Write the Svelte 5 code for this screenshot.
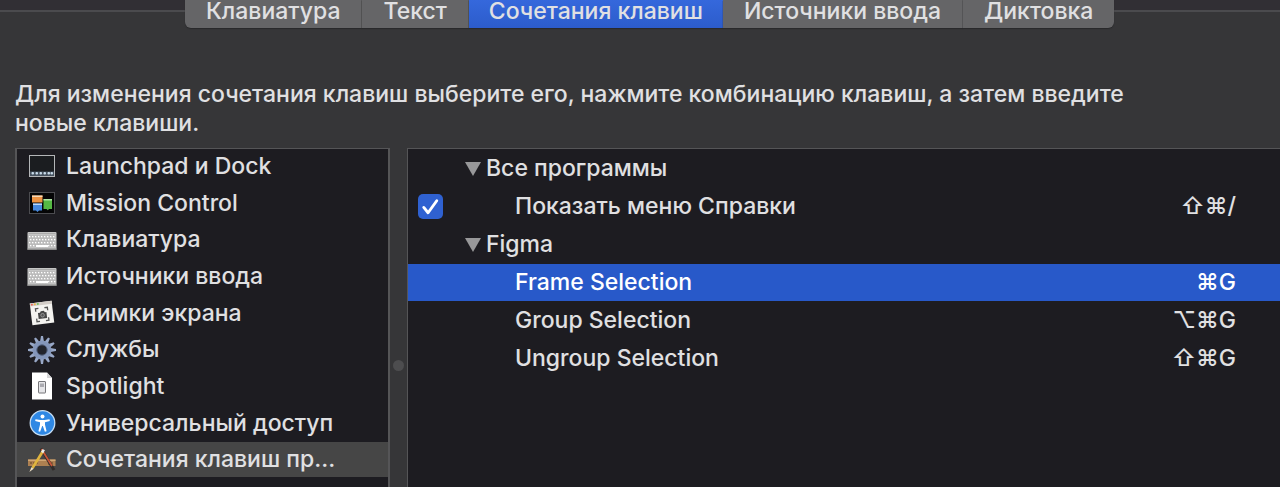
<script>
    let tabs = ['Клавиатура', 'Текст', 'Сочетания клавиш', 'Источники ввода', 'Диктовка'];
    let activeTab = $state('Сочетания клавиш');

    let categories = [
        { icon: 'launchpad', name: 'Launchpad и Dock' },
        { icon: 'mission', name: 'Mission Control' },
        { icon: 'keyboard', name: 'Клавиатура' },
        { icon: 'keyboard', name: 'Источники ввода' },
        { icon: 'screenshot', name: 'Снимки экрана' },
        { icon: 'gear', name: 'Службы' },
        { icon: 'spotlight', name: 'Spotlight' },
        { icon: 'access', name: 'Универсальный доступ' },
        { icon: 'apps', name: 'Сочетания клавиш пр...' }
    ];
    let activeCategory = $state('Сочетания клавиш пр...');

    let groups = $state([
        {
            name: 'Все программы',
            open: true,
            items: [{ name: 'Показать меню Справки', keys: '⇧⌘/', checkable: true, checked: true }]
        },
        {
            name: 'Figma',
            open: true,
            items: [
                { name: 'Frame Selection', keys: '⌘G' },
                { name: 'Group Selection', keys: '⌥⌘G' },
                { name: 'Ungroup Selection', keys: '⇧⌘G' }
            ]
        }
    ]);
    let selected = $state('Frame Selection');

    const keyRows = [12, 15, 18, 21];
    const keyCols = [3, 6, 9, 12, 15, 18, 21, 24, 27];
    const teeth = [0, 30, 60, 90, 120, 150, 180, 210, 240, 270, 300, 330];
</script>

{#snippet icon(name)}
    <svg class="icon" viewBox="0 0 30 30" aria-hidden="true">
        {#if name === 'launchpad'}
            <rect x="2.5" y="4.5" width="25" height="21" fill="#1b1d20" stroke="#b4b6b8" />
            <path d="M3 20.500h24v4.500H3z" fill="#47525f" />
            {#each [4.5, 8.5, 12.5, 16.5, 20.5, 23.5] as x}
                <rect {x} y="21" width="2.500" height="2.600" rx="1" fill="#c8dbea" />
            {/each}
        {:else if name === 'mission'}
            <rect x="2.5" y="4.5" width="25" height="21" fill="#050506" stroke="#4c4c50" />
            <path d="M5 7.500h10.500v7H5z" fill="#ef9443" />
            <path d="M5 7.500h10.500V9H5z" fill="#f6d9b8" />
            <path d="M6 15.500h9v7h-3l-1.500 1.500L9 22.500H6z" fill="#4789df" />
            <path d="M6 15.500h9V17H6z" fill="#bcd9fa" />
            <path d="M16.500 11H25v10h-3l-1.200 1.200L19.500 21h-3z" fill="#55b944" />
            <path d="M16.500 11H25v1.500h-8.500z" fill="#b3e6a7" />
        {:else if name === 'keyboard'}
            <rect x="0.5" y="7" width="29" height="18" rx="1" fill="#c5c5c5" />
            <path d="M0.500 23.500h29V25h-29z" fill="#8c8c8c" />
            <path d="M1.500 8.500h27" stroke="#aaa" />
            {#each keyRows as y, i}
                {#each keyCols as x}
                    <rect x={x + (i % 2) - 1.5} y={y - 1.5} width="2.300" height="2.200" rx="0.4" fill="#fff" stroke="#8b8b8b" stroke-width="0.4" />
                {/each}
            {/each}
            <path d="M9 20h12v2H9z" fill="#fff" />
        {:else if name === 'screenshot'}
            <g transform="rotate(-7 15 15)">
                <rect x="4" y="4" width="22" height="22" fill="#f4f3f0" />
                <path d="M4 4h22v3H4z" fill="#d3cdc8" />
                <circle cx="6" cy="5.500" r="1" fill="#eb6656" />
                <circle cx="9" cy="5.500" r="1" fill="#eab84b" />
                <circle cx="12" cy="5.500" r="1" fill="#6fc25c" />
                <path d="M9 13v-3h3M18 10h3v3M21 20v3h-3M12 23H9v-3" fill="none" stroke="#555" stroke-width="1.300" />
                <path d="M11 14.500h2l1-1.500h3l1 1.500h1.500v6H11z" fill="#464646" />
                <circle cx="15.300" cy="17.300" r="1.800" fill="#555" stroke="#aaa" stroke-width="0.7" />
            </g>
        {:else if name === 'gear'}
            {#each teeth as angle}
                <path d="M14 1h2l.9 5.500h-3.800z" fill="#98a8c7" transform="rotate({angle} 15 15)" />
            {/each}
            <circle cx="15" cy="15" r="7.300" fill="none" stroke="#8496ba" stroke-width="4.400" />
            <circle cx="15" cy="15" r="5.200" fill="#22242c" stroke="#566584" stroke-width="1" />
        {:else if name === 'spotlight'}
            <path d="M5 1.500h15l5 5.500v21.500H5z" fill="#fff" />
            <path d="M20 1.500V7h5z" fill="#d5d5d7" />
            <rect x="11.500" y="10.500" width="7" height="11.500" rx="0.5" fill="#e5e5e8" stroke="#77777b" />
            <path d="M13 12.500h4v3.500h-4z" fill="#aaaab0" />
        {:else if name === 'access'}
            <circle cx="15.500" cy="15" r="12.300" fill="#2f88e4" stroke="#c5ddf3" stroke-width="1.300" />
            <circle cx="15.500" cy="8.600" r="2" fill="#fff" />
            <path d="M8.500 11.200l5 .8h4l5-.8.3 1.700-4.800 1.300v2.500l1.600 6.500-1.700.6-2.100-5.800h-.6l-2.100 5.800-1.700-.6 1.600-6.500v-2.500l-4.800-1.300z" fill="#fff" />
        {:else}
            <path d="M1 14.500h27.500v6.500H1z" fill="#ad8051" />
            <path d="M1 14.500h27.500V16H1z" fill="#d1a673" />
            <path d="M4 17v2M7 17v3M10 17v2M22 17v3M25 17v2" stroke="#624325" />
            <path d="M14 3.500l13 21.500" stroke="#312b2a" stroke-width="3" />
            <path d="M14.500 4l10.500 17" stroke="#c75639" stroke-width="1.800" />
            <path d="M16 6L5.500 23" stroke="#dfb43e" stroke-width="2.600" />
            <path d="M16.800 4.700l-1.700 2.800" stroke="#ececec" stroke-width="2.600" />
            <path d="M4.400 22.300l-2 4.700 4.300-3.300z" fill="#eee0c6" />
        {/if}
    </svg>
{/snippet}

<div class="pane">
    <nav class="tabs">
        {#each tabs as tab}
            <button class="tab" class:active={tab === activeTab} onclick={() => (activeTab = tab)}>{tab}</button>
        {/each}
    </nav>

    <p class="hint">Для изменения сочетания клавиш выберите его, нажмите комбинацию клавиш, а затем введите новые клавиши.</p>

    <div class="columns">
        <ul class="categories">
            {#each categories as category}
                <li>
                    <button class="category" class:active={category.name === activeCategory} onclick={() => (activeCategory = category.name)}>
                        {@render icon(category.icon)}
                        <span>{category.name}</span>
                    </button>
                </li>
            {/each}
        </ul>

        <div class="splitter"><span class="grip"></span></div>

        <div class="shortcuts">
            <table>
                <tbody>
                    {#each groups as group}
                        <tr>
                            <td class="check"></td>
                            <td colspan="2">
                                <button class="group" onclick={() => (group.open = !group.open)}>
                                    <svg class="arrow" class:closed={!group.open} viewBox="0 0 18 14" aria-hidden="true"><path d="M1 0h16L9 14z" /></svg>
                                    {group.name}
                                </button>
                            </td>
                        </tr>
                        {#if group.open}
                            {#each group.items as item}
                                <tr class:selected={item.name === selected} onclick={() => (selected = item.name)}>
                                    <td class="check">
                                        {#if item.checkable}
                                            <span class="box">
                                                <input id="show-help" type="checkbox" bind:checked={item.checked} />
                                                <svg viewBox="0 0 26 26" aria-hidden="true"><path d="M6 14l4.500 5.500L19.500 7" /></svg>
                                            </span>
                                        {/if}
                                    </td>
                                    <td class="name">
                                        {#if item.checkable}
                                            <label for="show-help">{item.name}</label>
                                        {:else}
                                            {item.name}
                                        {/if}
                                    </td>
                                    <td class="keys">{item.keys}</td>
                                </tr>
                            {/each}
                        {/if}
                    {/each}
                </tbody>
            </table>
        </div>
    </div>
</div>

<style>
    :global(body) {
        background: #363638;
    }

    .pane {
        display: flex;
        flex-direction: column;
        box-sizing: border-box;
        min-height: 100vh;
        background: linear-gradient(#312f34 0 10px, #4b4b4e 10px 12px, #363638 12px);
        color: #e0e0e2;
        font-family: Inter, "Noto Sans", sans-serif;
        font-size: 23px;
        font-weight: 500;
        line-height: 29px;
    }

    button {
        margin: 0;
        border: none;
        background: none;
        color: inherit;
        font: inherit;
        text-align: left;
    }

    .tabs {
        display: flex;
        padding-left: 185px;
    }

    .tab {
        height: 28px;
        padding: 0 21px 6px;
        border-right: 1px solid #59595b;
        background: #656567;
        line-height: 22px;
        white-space: nowrap;
        box-shadow: 0 1px 1px #29292b;
    }

    .tab:first-child {
        border-bottom-left-radius: 6px;
    }

    .tab:last-child {
        border-right: none;
        border-bottom-right-radius: 6px;
    }

    .tab.active {
        padding: 0 20px 6px;
        border-right: none;
        background: linear-gradient(#3568dc, #2c5ccb);
    }

    .hint {
        max-width: 1160px;
        margin: 52px 0 0;
        padding: 0 15px;
    }

    .columns {
        display: flex;
        flex: 1;
        padding: 10px 0 0 15px;
    }

    .categories {
        display: flex;
        flex-direction: column;
        gap: 2px;
        flex: none;
        box-sizing: border-box;
        width: 375px;
        margin: 0;
        padding: 0 0 10px;
        border: solid #555557;
        border-width: 1px 2px 0;
        background: #1d1c21;
        list-style: none;
    }

    .categories li {
        display: flex;
        flex: 1;
    }

    .category {
        display: flex;
        align-items: center;
        gap: 9px;
        width: 100%;
        padding: 0 10px;
        white-space: nowrap;
    }

    .category.active {
        background: #464646;
    }

    .icon {
        flex: none;
        width: 30px;
        height: 30px;
    }

    .splitter {
        display: flex;
        justify-content: center;
        width: 17px;
        padding-top: 212px;
    }

    .grip {
        width: 11px;
        height: 11px;
        border-radius: 50%;
        background: #4d4d4f;
    }

    .shortcuts {
        flex: 1;
        border: solid #555557;
        border-width: 1px 0 0 1px;
        background: #1d1c21;
    }

    table {
        width: 100%;
        border-spacing: 0 1px;
    }

    tr {
        height: 37px;
    }

    td {
        padding: 0;
        white-space: nowrap;
    }

    tr.selected {
        background: #2859c9;
        color: #fff;
    }

    .check {
        width: 46px;
        padding-left: 10px;
    }

    .group {
        display: flex;
        align-items: center;
        gap: 4px;
        padding: 0;
    }

    .arrow {
        width: 18px;
        height: 14px;
        fill: #98989a;
    }

    .arrow.closed {
        transform: rotate(-90deg);
    }

    .box {
        display: grid;
        width: 25px;
        height: 25px;
    }

    .box input,
    .box svg {
        grid-area: 1 / 1;
        width: 25px;
        height: 25px;
        margin: 0;
    }

    .box input {
        appearance: none;
        border-radius: 5px;
        background: #565658;
    }

    .box input:checked {
        background: #2f61d1;
    }

    .box svg {
        fill: none;
        stroke: #fff;
        stroke-width: 3;
        stroke-linecap: round;
        stroke-linejoin: round;
        pointer-events: none;
    }

    .box input:not(:checked) + svg {
        visibility: hidden;
    }

    .name {
        padding-left: 51px;
    }

    .keys {
        padding-right: 44px;
        text-align: right;
    }
</style>
